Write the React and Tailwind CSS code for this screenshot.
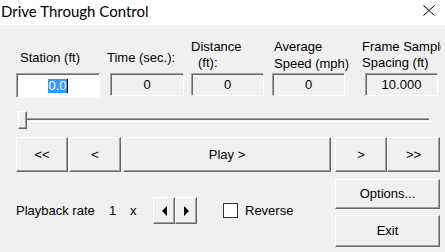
import React from "react";

const raised =
  "border border-t-white border-l-white border-b-[#696969] border-r-[#696969] shadow-[inset_-1px_-1px_0_#a0a0a0] bg-[#f0f0f0]";
const sunken =
  "border border-t-[#a0a0a0] border-l-[#a0a0a0] border-b-white border-r-white shadow-[inset_1px_1px_0_#696969]";

function Field({ value, className }) {
  return (
    <div className={`${sunken} h-[23px] flex items-center justify-center bg-[#f0f0f0] ${className}`}>
      {value}
    </div>
  );
}

function Btn({ children, className }) {
  return (
    <div className={`${raised} flex items-center justify-center ${className}`}>
      {children}
    </div>
  );
}

export default function App() {
  return (
    <div className="w-[445px] h-[252px] bg-[#f0f0f0] overflow-hidden text-black font-['Liberation_Sans',Arial,sans-serif] text-[13px] leading-[16px]">
      {/* title bar */}
      <div className="h-[25px] bg-white flex items-start">
        <div className="pl-[1px] text-[15px] leading-[20px] pt-[1px] font-['Lato',sans-serif]">
          Drive Through Control
        </div>
        <svg className="ml-auto mr-[10px] mt-[5px]" width="12" height="11" viewBox="0 0 12 11">
          <path d="M0.5 0.5 L11.5 10.5 M11.5 0.5 L0.5 10.5" stroke="#000" strokeWidth="1" fill="none" />
        </svg>
      </div>

      {/* labels */}
      <div className="h-[48px] flex items-start">
        <div className="ml-[20px] w-[87px] pt-[25px]">Station (ft)</div>
        <div className="w-[84px] pt-[25px]">Time (sec.):</div>
        <div className="w-[83px] pt-[14px]">
          <div>Distance</div>
          <div className="pl-[7px]">(ft):</div>
        </div>
        <div className="w-[88px] pt-[14px]">
          <div>Average</div>
          <div className="mt-[1px]">Speed (mph)</div>
        </div>
        <div className="w-[79px] pt-[14px] overflow-hidden whitespace-nowrap">
          <div>Frame Sample</div>
          <div>Spacing (ft)</div>
        </div>
      </div>

      {/* fields */}
      <div className="flex items-start h-[25px]">
        <div className={`${sunken} ml-[16px] w-[84px] h-[25px] bg-white flex items-center justify-center`}>
          <span className="bg-[#3399ff] text-white leading-[14px]">0.0</span>
          <span className="w-px h-[14px] bg-black" />
        </div>
        <Field value="0" className="ml-[10px] w-[74px]" />
        <Field value="0" className="ml-[7px] w-[73px]" />
        <Field value="0" className="ml-[8px] w-[73px]" />
        <Field value="10.000" className="ml-[20px] w-[73px]" />
      </div>

      {/* slider */}
      <div className="relative ml-[18px] mt-[13px] w-[412px] h-[18px]">
        <div className="absolute left-0 right-0 top-[7px] h-[4px] border-t border-t-[#a0a0a0] border-b border-b-white border-r border-r-white shadow-[inset_0_1px_0_#696969]" />
        <div className="absolute left-0 top-0 w-[9px] h-[18px] border border-t-white border-l-white border-b-[#696969] border-r-[#696969] shadow-[inset_-1px_-1px_0_#a0a0a0] bg-[#f0f0f0]" />
      </div>

      {/* transport buttons */}
      <div className="flex mt-[8px] h-[35px]">
        <Btn className="ml-[16px] w-[52px]">&lt;&lt;</Btn>
        <Btn className="ml-[1px] w-[52px]">&lt;</Btn>
        <Btn className="ml-[2px] w-[208px]">Play &gt;</Btn>
        <Btn className="ml-[4px] w-[52px]">&gt;</Btn>
        <Btn className="w-[53px]">&gt;&gt;</Btn>
      </div>

      {/* bottom */}
      <div className="flex">
        <div className="mt-[25px] h-[27px] flex items-center">
          <div className="ml-[16px] w-[93px]">Playback rate</div>
          <div className="w-[21px]">1</div>
          <div className="w-[23px]">x</div>
          <div className="flex h-[27px]">
            <Btn className="w-[22px] h-[27px]">
              <svg width="5" height="10" viewBox="0 0 5 10">
                <path d="M5 0 L0 5 L5 10 Z" fill="#000" />
              </svg>
            </Btn>
            <Btn className="w-[22px] h-[27px]">
              <svg width="5" height="10" viewBox="0 0 5 10">
                <path d="M0 0 L5 5 L0 10 Z" fill="#000" />
              </svg>
            </Btn>
          </div>
          <div className="ml-[26px] w-[15px] h-[15px] bg-white border border-[#333]" />
          <div className="ml-[7px]">Reverse</div>
        </div>
        <div className="ml-auto mr-[5px] mt-[7px] w-[105px] flex flex-col gap-[6px]">
          <Btn className="h-[30px]">Options...</Btn>
          <Btn className="h-[32px]">Exit</Btn>
        </div>
      </div>
    </div>
  );
}
